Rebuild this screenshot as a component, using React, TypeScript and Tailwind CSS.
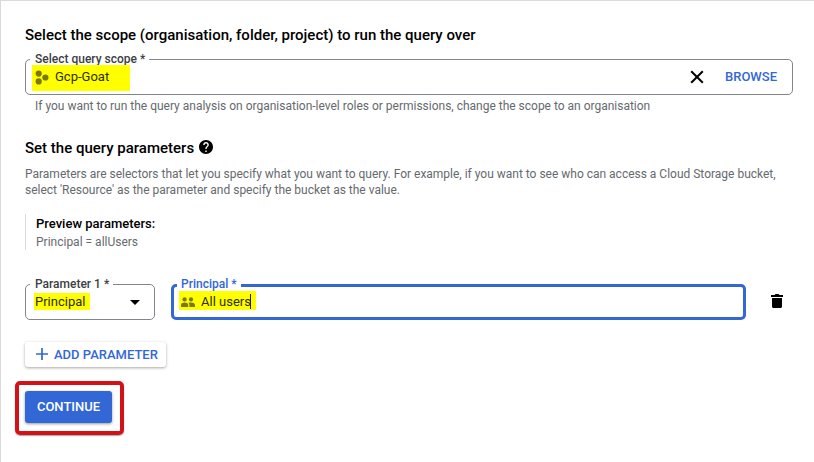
import type { ReactNode } from 'react';

function FieldLabel({ children, className }: { children: ReactNode; className: string }) {
  return (
    <span className={`absolute bg-white whitespace-nowrap text-xs leading-4 font-medium ${className}`}>
      {children}
    </span>
  );
}

function ProjectIcon() {
  return (
    <svg className="mb-px shrink-0" width="14" height="15" viewBox="0 0 14 15" fill="#7a7800">
      <circle cx="3.7" cy="3.6" r="3.1" />
      <circle cx="3.7" cy="11.4" r="3.1" />
      <circle cx="10.4" cy="7.500" r="3.1" />
    </svg>
  );
}

function UsersIcon() {
  return (
    <svg className="mt-0.5 shrink-0" width="14" height="10" viewBox="0 0 14 10" fill="#7a7800">
      <circle cx="3.6" cy="2.4" r="2.1" />
      <circle cx="10" cy="2.4" r="2.1" />
      <path d="M0 10V8c0-1.700 2-2.400 3.600-2.400S7.200 6.300 7.200 8v2z" />
      <path d="M8.400 10V8c0-1-.4-1.700-1-2.200.8-.2 1.700-.3 2.600-.3 1.900 0 4 .8 4 2.500v2z" />
    </svg>
  );
}

function HelpIcon() {
  return (
    <svg className="mb-0.5" width="14" height="14" viewBox="2 2 20 20" fill="#000">
      <path d="M12 2C6.480 2 2 6.480 2 12s4.480 10 10 10 10-4.480 10-10S17.520 2 12 2zm1 17h-2v-2h2v2zm2.070-7.750l-.9.920C13.450 12.900 13 13.500 13 15h-2v-.5c0-1.100.45-2.100 1.170-2.830l1.240-1.260c.37-.36.59-.86.59-1.410 0-1.100-.9-2-2-2s-2 .9-2 2H8c0-2.210 1.790-4 4-4s4 1.790 4 4c0 .88-.36 1.680-.93 2.250z" />
    </svg>
  );
}

export default function App() {
  return (
    <main
      className="h-[462px] w-[814px] overflow-hidden border-t border-l border-[#dadada] bg-white pt-[23px] pl-6 text-black"
      style={{ fontFamily: 'Roboto, "Liberation Sans", sans-serif' }}
    >
      <h2 className="h-[35px] text-[15px] leading-[22px] font-medium whitespace-nowrap">
        Select the scope (organisation, folder, project) to run the query over
      </h2>
      <div className="relative flex h-9 w-[768px] items-center rounded-[5px] border border-[#80868b] pl-1.5">
        <FieldLabel className="-top-[9px] left-1 pr-1 pl-[5px] text-[#3c4043]">Select query scope *</FieldLabel>
        <div className="relative mt-0.5 flex h-[26px] w-[98px] items-center gap-1.5 bg-[#ffff00] pl-[3px] text-[13px] text-[#2d2d00]">
          <ProjectIcon />
          <span className="pb-0.5">Gcp-Goat</span>
        </div>
        <svg className="ml-[560px]" width="14" height="14" viewBox="0 0 14 14" stroke="#000" strokeWidth="2">
          <path d="M1.200 1.200l11.600 11.600M12.800 1.200L1.200 12.800" />
        </svg>
        <span className="ml-[21px] text-[13px] font-medium text-[#3367d6]">BROWSE</span>
      </div>
      <p className="mt-[3px] pl-2.5 text-xs leading-4 tracking-[-0.006px] whitespace-nowrap text-[#666a6e]">
        If you want to run the query analysis on organisation-level roles or permissions, change the scope to an organisation
      </p>
      <h2 className="mt-[23px] flex h-[22px] items-center gap-[5px] text-[15px] leading-[22px] font-medium whitespace-nowrap">
        Set the query parameters <HelpIcon />
      </h2>
      <p className="mt-[7px] text-xs leading-4 tracking-[-0.006px] whitespace-nowrap text-[#666a6e]">
        Parameters are selectors that let you specify what you want to query. For example, if you want to see who can access a Cloud Storage bucket,
        <br />
        select 'Resource' as the parameter and specify the bucket as the value.
      </p>
      <div className="mt-4 h-9 border-l border-[#dadce0] pl-2.5">
        <div className="text-[13px] leading-[19px] font-medium">Preview parameters:</div>
        <div className="text-xs leading-[18px] text-[#666a6e]">Principal = allUsers</div>
      </div>
      <div className="mt-[34px] flex h-9 items-center">
        <div className="relative flex h-9 w-[130px] items-center rounded-[5px] border border-[#80868b] pl-2">
          <FieldLabel className="-top-[9px] left-1 pr-1 pl-[5px] text-[#3c4043]">Parameter 1 *</FieldLabel>
          <span className="mb-px h-[17px] w-14 bg-[#ffff00] pl-px text-[13px] leading-[17px] text-[#2d2d00]">Principal</span>
          <svg className="ml-10" width="10" height="5" viewBox="0 0 10 5" fill="#000">
            <path d="M0 0h10L5 5z" />
          </svg>
        </div>
        <div className="relative ml-4 flex h-9 w-[575px] items-center rounded-[5px] border-3 border-[#3367d6] pl-[5px]">
          <FieldLabel className="-top-[11px] left-[3px] pr-1 pl-1 text-[#3367d6]">Principal *</FieldLabel>
          <div className="relative mb-[3px] flex h-[19px] w-[77px] items-center bg-[#ffff00] pl-0.5 text-[13px] text-[#2d2d00]">
            <UsersIcon />
            <span className="ml-1.5 pt-0.5">All users</span>
            <span className="-ml-px mt-px h-[15px] w-px bg-[#202000]" />
          </div>
        </div>
        <svg className="mb-0.5 ml-[25px]" width="12" height="14" viewBox="0 0 12 14" fill="#000">
          <path d="M0 1h3.500l1-1h3l1 1H12v2H0zM1 4h10v8.500c0 .8-.7 1.500-1.500 1.500h-7C1.700 14 1 13.300 1 12.500z" />
        </svg>
      </div>
      <button className="mt-[22px] flex h-[25px] w-[141px] items-center rounded-[3px] bg-white pl-[11px] text-[13px] font-medium whitespace-nowrap text-[#3367d6] shadow-[0_1px_3px_rgba(0,0,0,0.35)]">
        <svg className="mb-px" width="12" height="12" viewBox="0 0 12 12" stroke="#3367d6" strokeWidth="1.700">
          <path d="M6 0v12M0 6h12" />
        </svg>
        <span className="ml-1.5">ADD PARAMETER</span>
      </button>
      <div className="mt-[14px] -ml-2.5 h-[54px] w-[109px] rounded-[5px] border-4 border-[#d31217] p-1.5 shadow-[0_1px_1px_rgba(80,80,80,0.5)]">
        <button className="flex h-8 w-[87px] items-center justify-center rounded-[3px] bg-[#3367d6] text-[13px] font-medium text-white shadow-[0_1px_3px_rgba(0,0,0,0.4)]">
          CONTINUE
        </button>
      </div>
    </main>
  );
}
